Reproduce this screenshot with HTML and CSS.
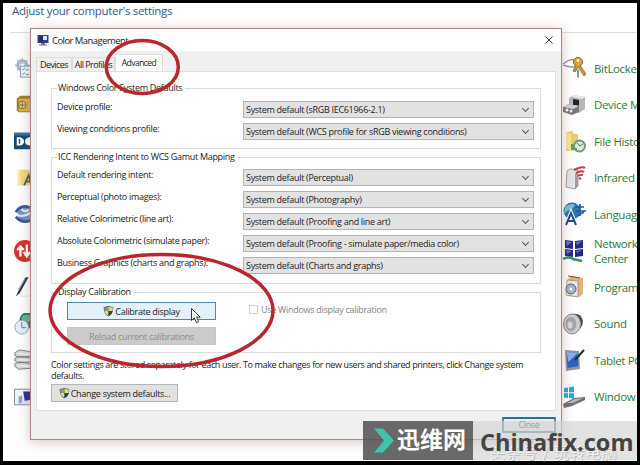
FILE: index.html
```html
<!DOCTYPE html>
<html lang="en">
<head>
    <meta charset="UTF-8">
    <title>Color Management</title>
    <link rel="stylesheet" href="styles.css">
</head>
<body>
    <svg width="0" height="0" class="defs">
        <symbol id="shield" viewBox="0 0 12 12">
            <path d="M6 .3C4.500 1.300 2.500 1.600.800 1.500.600 6 2 9.800 6 11.800 10 9.800 11.400 6 11.200 1.500 9.500 1.600 7.500 1.300 6 .3z" fill="#355a58"/>
            <path d="M6 1.200v4.800H1.500C1.300 4.800 1.300 3.500 1.400 2.300 3 2.300 4.600 2 6 1.200z" fill="#7b9a92"/>
            <path d="M6 1.200v4.800h4.500c.2-1.200.2-2.500.1-3.700C9 2.300 7.400 2 6 1.200z" fill="#f0d873"/>
            <path d="M6 6H1.600C2 8.300 3.500 10 6 11.200z" fill="#ebd585"/>
            <path d="M6 6h4.400C10 8.300 8.500 10 6 11.200z" fill="#24465c"/>
        </symbol>
    </svg>

    <div class="desktop">
        <h1>Adjust your computer's settings</h1>
        <div class="panel">
            <div class="left-items">
                <svg viewBox="0 0 24 24"><circle cx="9" cy="9" r="5" fill="none" stroke="#9eb3c9" stroke-width="3"/><path d="M9 1v16M1 9h16M3.500 3.500l11 11M14.500 3.500l-11 11" stroke="#a8bacd" stroke-width="1.500"/><circle cx="9" cy="9" r="2" fill="#fff"/><path d="M7 10h13v12H7z" fill="#f5f7fa" stroke="#8097b0"/><path d="M9 13l1 1 2-2M9 18l1 1 2-2M13 14h3M13 19h3" stroke="#4a75a5" fill="none"/></svg>
                <svg viewBox="0 0 24 24"><path d="M3 5l4-3h13v18H5l-2-2z" fill="#a47a24"/><path d="M5 5h14v14H5z" fill="#dfb043"/><circle cx="9" cy="12" r="4" fill="#f1dda0" stroke="#6c572b"/><path d="M9 9v6M6 12h6" stroke="#6c572b"/></svg>
                <svg viewBox="0 0 24 24"><path d="M0 3h24v18H0z" fill="#174a73"/><path d="M0 3h24v3H0z" fill="#347398"/><path d="M3 8h3q5 1 5 4.500T6 17H3zM20 8h-3q-5 1-5 4.500t5 4.500h3z" fill="#fff"/><path d="M6 10v5" stroke="#174a73" stroke-width="1.500"/></svg>
                <svg viewBox="0 0 24 24"><path d="M4 3h16v17H4z" fill="#f4d77e"/><path d="M4 3h3v17H4z" fill="#fae9a7"/><path d="M11 20l5-11 3 11M12 16h6" stroke="#3c6c4f" stroke-width="2" fill="none"/></svg>
                <svg viewBox="0 0 24 24"><circle cx="13" cy="12" r="9" fill="#7693c7"/><path d="M2 10q6-9 15-5M2 15q7 8 16 4" fill="none" stroke="#36599d" stroke-width="3"/><path d="M4 13q6 3 14-2M8 7q5 4 8 0" stroke="#dfe9f7" stroke-width="2.500" fill="none"/></svg>
                <svg viewBox="0 0 24 24"><circle cx="12" cy="12" r="12" fill="#d6342b"/><path d="M7 18V7M3.500 11L7 7l3.500 4M14 5v12M10.500 13l3.500 5 3.500-5" fill="none" stroke="#fff" stroke-width="2.500"/></svg>
                <svg viewBox="0 0 24 24"><path d="M2 22L12 2l4-1L6 19z" fill="#283447"/><path d="M5 15l7-12" stroke="#93a7be" stroke-width="1.500"/><path d="M7 22h10" stroke="#e1e1e1"/></svg>
                <svg viewBox="0 0 24 24"><circle cx="15" cy="8" r="9" fill="#26718f"/><path d="M8 4q7-5 12 1l-4 5-7 2z" fill="#62b58a"/><circle cx="8.500" cy="15.500" r="7.500" fill="#e3f0f7" stroke="#86a6ba"/><path d="M8.500 10v6H13" stroke="#5c7487" fill="none"/></svg>
                <svg viewBox="0 0 24 24"><g fill="#dadada" stroke="#7a7a7a"><path d="M1 4l5-3 13 2v5L5 9 1 7zM1 10l5-2 13 2v4L5 15l-4-2zM1 16l5-2 13 2v5L5 22l-4-3z"/></g><path d="M5 5l13 1M5 12l13 0M5 18l13 1" stroke="#fff"/></svg>
                <svg viewBox="0 0 24 24"><path d="M.5 3.500h23v17H.5z" fill="#eef2fb" stroke="#7b839b"/><path d="M10 6h12v12H12z" fill="#2b2f99"/><path d="M5 12l4-2v9H5z" fill="#8ca0c8"/><path d="M8 17l10-2 3 4H8z" fill="#d9dfef"/></svg>
            </div>
            <div class="right-items">
                <div class="item">
                    <svg viewBox="0 0 24 24"><path d="M1 8q9-8 20-2M1 9q10 4 15 0" stroke="#9d9ab6" stroke-width="1.500" fill="none"/><circle cx="16" cy="6" r="4.500" fill="#d2a83e" stroke="#846521"/><circle cx="16" cy="4.500" r="1.300" fill="#fff"/><path d="M14 9l-3 6 2 1 3-5 6 9 2-2-6-9" fill="#c4973a" stroke="#806128" stroke-width=".7"/><path d="M15 13v8l2 1v-8" fill="#8c9097"/></svg>
                    <span>BitLocker</span>
                </div>
                <div class="item">
                    <svg viewBox="0 0 24 24"><path d="M7 5l5-3 11 2v12l-6 4-10-2z" fill="#b7b8ba"/><path d="M12 2l11 2-3 2-10-2z" fill="#e9e9e9"/><path d="M11 6l6 1v6l-6-1z" fill="#202426"/><path d="M1 14l6-3 10 2v6L10 22 1 19z" fill="#77797d"/><path d="M1 14l6-3 10 2-6 3z" fill="#d0d1d4"/><circle cx="5" cy="17" r="1.500" fill="#fff"/><circle cx="9" cy="18" r="1.500" fill="#eee"/></svg>
                    <span>Device M</span>
                </div>
                <div class="item">
                    <svg viewBox="0 0 24 24"><path d="M4 3l7-1v3h5v16L4 22z" fill="#edce6b"/><path d="M4 3l5 2v17l-5-3z" fill="#f9e49a"/><circle cx="17.500" cy="17" r="5.500" fill="#dfeade" stroke="#6d987f" stroke-width="2"/><path d="M15 14l3 3 3-2" stroke="#47755b" fill="none"/><path d="M10 15v5h5" stroke="#54a45d" stroke-width="2" fill="none"/></svg>
                    <span>File Histo</span>
                </div>
                <div class="item">
                    <svg viewBox="0 0 24 24"><path d="M5 5l3-2 8 1v16l-3 3-9-2z" fill="#e4e5e8" stroke="#8b8c92" stroke-width=".8"/><path d="M13 8l3-3v15l-3 3z" fill="#9b9da3"/><path d="M12 4q8-4 11-2M14 7q5-3 8-1M16 10q3-2 5-1M17 13l2-1" stroke="#c53b43" stroke-width="2" fill="none"/></svg>
                    <span>Infrared</span>
                </div>
                <div class="item">
                    <svg viewBox="0 0 24 24"><circle cx="10" cy="9" r="8.500" fill="#2778b4"/><path d="M3 5q6-5 10-2l-3 4-5 2-3 3z" fill="#77bfd3"/><path d="M13 5h9M14 9h10M18 2v12M15 14l7-4" stroke="#245b9c" stroke-width="1.700"/><path d="M4 23l5-12 5 12M6 19h7" stroke="#fff" stroke-width="4" fill="none"/><path d="M4 23l5-12 5 12M6 19h7" stroke="#1d5195" stroke-width="2" fill="none"/></svg>
                    <span>Languag</span>
                </div>
                <div class="item">
                    <svg viewBox="0 0 24 24"><path d="M3 1l8 1v8l-8-1zM13 2l8-1v8l-8 1zM3 10l8 1v7l-8-1zM13 11l8-1v7l-8 1z" fill="#242989"/><path d="M4 2l6 1-5 4zM14 3l6-1-5 4zM4 11l6 1-5 3zM14 12l6-1-5 3z" fill="#6874c2"/><path d="M1 20q6-3 10 0l9 2" stroke="#37955d" stroke-width="2.500" fill="none"/></svg>
                    <span>Network<br>Center</span>
                </div>
                <div class="item">
                    <svg viewBox="0 0 24 24"><path d="M6 4l4-3 11 2v16l-4 3-11-1z" fill="#dfb476"/><path d="M5 5l11 1v16L4 20z" fill="#eee9df" stroke="#9b8d79" stroke-width=".8"/><path d="M6 1l12 2" stroke="#6b533d"/><circle cx="9" cy="14" r="5" fill="#a5b6c5" stroke="#586673"/><circle cx="9" cy="14" r="1.500" fill="#fff"/></svg>
                    <span>Program</span>
                </div>
                <div class="item">
                    <svg viewBox="0 0 24 24"><path d="M10 2q9-2 11 7 0 8-10 13z" fill="#494b4f"/><ellipse cx="10" cy="12" rx="8.500" ry="10" fill="#cdced1" stroke="#8b8d91"/><ellipse cx="9" cy="12" rx="5.500" ry="7" fill="#a2a5ab"/><ellipse cx="8" cy="13" rx="2.500" ry="3.500" fill="#d8dade"/></svg>
                    <span>Sound</span>
                </div>
                <div class="item">
                    <svg viewBox="0 0 24 24"><path d="M3 2l14 1 1 18-14 2z" fill="#8e97a5"/><path d="M4.500 4l11 1 1 13-11 2z" fill="#2f61c4"/><path d="M4.500 4l11 1-9 9z" fill="#8cb2ec"/><path d="M22 2l-9 10" stroke="#282d35" stroke-width="2"/></svg>
                    <span>Tablet PC</span>
                </div>
                <div class="item">
                    <svg viewBox="0 0 24 24"><path d="M2 3l4-.6v4.800H2zM7 2.200L12 1.500v5.700H7zM2 8.200h4V13l-4-.6zM7 8.200h5v5.600L7 13z" fill="#28a9da"/><path d="M1 19l11-6 11-1v3l-13 6-8 2z" fill="#6e7175"/><path d="M5 18l8-4 8-1-10 5z" fill="#b5b7ba"/></svg>
                    <span>Window</span>
                </div>
            </div>
        </div>
    </div>

    <div class="dialog">
        <div class="titlebar">
            <svg class="app-icon" viewBox="0 0 12 12"><path d="M.5 1h11v8H.5z" fill="#22458e"/><path d="M2 2h4v6H2z" fill="#203070"/><path d="M6 2h4v4H6z" fill="#dce9fa"/><path d="M4 9h4v1.500h2v1H2v-1h2z" fill="#6e7d96"/></svg>
            <span>Color Management</span>
            <svg class="close-x" viewBox="0 0 8 8"><path d="M.5.5l7 7M7.500.5l-7 7" stroke="#333"/></svg>
        </div>
        <div class="tabs">
            <div class="tab">Devices</div>
            <div class="tab profiles">All Profiles</div>
            <div class="tab active">Advanced</div>
        </div>
        <div class="tab-body">
            <fieldset>
                <legend>Windows Color System Defaults</legend>
                <div class="row"><label>Device profile:</label><div class="select">System default (sRGB IEC61966-2.1)</div></div>
                <div class="row"><label>Viewing conditions profile:</label><div class="select">System default (WCS profile for sRGB viewing conditions)</div></div>
            </fieldset>
            <fieldset class="mapping">
                <legend>ICC Rendering Intent to WCS Gamut Mapping</legend>
                <div class="row"><label>Default rendering intent:</label><div class="select">System default (Perceptual)</div></div>
                <div class="row"><label>Perceptual (photo images):</label><div class="select">System default (Photography)</div></div>
                <div class="row"><label>Relative Colorimetric (line art):</label><div class="select">System default (Proofing and line art)</div></div>
                <div class="row"><label>Absolute Colorimetric (simulate paper):</label><div class="select">System default (Proofing - simulate paper/media color)</div></div>
                <div class="row"><label>Business Graphics (charts and graphs):</label><div class="select">System default (Charts and graphs)</div></div>
            </fieldset>
            <fieldset class="calibration">
                <legend>Display Calibration</legend>
                <div class="cal-buttons">
                    <div class="btn hover"><svg class="shield"><use href="#shield"/></svg><span>Calibrate display</span></div>
                    <div class="btn disabled">Reload current calibrations</div>
                </div>
                <div class="check"><span class="box"></span><span>Use Windows display calibration</span></div>
            </fieldset>
            <p class="note">Color settings are stored separately for each user. To make changes for new users and shared printers, click Change system<br>defaults.</p>
            <div class="btn change"><svg class="shield"><use href="#shield"/></svg><span>Change system defaults...</span></div>
        </div>
        <div class="footer">
            <div class="close-btn">Close</div>
        </div>
    </div>

    <div class="watermark">
        <div class="brand">
            <svg viewBox="0 0 20 24"><path d="M0 0h9l11 12L9 24H0l10-12z" fill="#3fc3ad"/></svg>
            <span>迅维网</span>
        </div>
        <div class="site">
            <span class="credit">头条号 / 玩转电脑</span>
            <span class="domain">Chinafix.com</span>
        </div>
    </div>

    <!-- red circles and mouse pointer -->
    <svg class="marks" viewBox="0 0 640 465">
        <ellipse cx="142.300" cy="67" rx="36" ry="26.500"/>
        <ellipse cx="161.500" cy="310.500" rx="111.500" ry="56"/>
        <path class="pointer" d="M191.500 308.500v12l2.800-2.500 2.200 4.700 2.200-1-2.200-4.500h3.700z"/>
    </svg>
</body>
</html>
```
FILE: styles.css
```css
* {
    box-sizing: border-box;
}
body {
    margin: 0;
    width: 640px;
    height: 465px;
    padding: 3px 3px 4px;
    overflow: hidden;
    position: relative;
    background: #000;
    font-family: "Open Sans", "Noto Sans", sans-serif;
    font-size: 9px;
    color: #222;
}
.defs {
    position: absolute;
}

/* control panel behind the dialog */
.desktop {
    height: 458px;
    background: #fff;
    overflow: hidden;
}
.desktop h1 {
    margin: 0 0 0 7px;
    height: 30px;
    padding-left: 2px;
    border-bottom: 1px solid #dedede;
    font-size: 11.5px;
    letter-spacing: -0.3px;
    font-weight: normal;
    line-height: 15px;
    color: #35577f;
    white-space: nowrap;
}
.panel {
    display: flex;
    justify-content: space-between;
    padding: 17px 0 0 10px;
}
.left-items,
.right-items {
    display: grid;
    grid-template-rows: repeat(10, 36.500px);
    align-items: center;
}
.left-items svg {
    width: 24px;
    height: 22px;
}
.right-items {
    width: 75px;
}
.item {
    display: flex;
    align-items: center;
    gap: 8px;
    font-size: 11.500px;
    letter-spacing: -0.35px;
    line-height: 15px;
    color: #2f7b38;
    white-space: nowrap;
}
.item svg {
    width: 24px;
    height: 24px;
    flex: none;
}

/* dialog window */
.dialog {
    position: absolute;
    left: 30px;
    top: 28px;
    width: 532px;
    height: 412px;
    border: 1px solid #ad8580;
    background: #f0f0f0;
    box-shadow: 0 2px 12px rgba(110, 60, 50, 0.3);
    letter-spacing: -0.3px;
}
.titlebar {
    display: flex;
    align-items: center;
    height: 22px;
    padding: 0 8px 0 6px;
    background: #fff;
    font-size: 9.500px;
    letter-spacing: -0.550px;
}
.app-icon {
    width: 12px;
    height: 12px;
    margin-right: 3px;
}
.close-x {
    width: 8px;
    height: 8px;
    margin-left: auto;
}
.tabs {
    display: flex;
    align-items: flex-end;
    height: 20px;
    padding-left: 5px;
    letter-spacing: -0.550px;
}
.tab {
    width: 36px;
    height: 14px;
    border: 1px solid #dcdcdc;
    border-bottom: none;
    line-height: 14px;
    text-align: center;
    white-space: nowrap;
}
.tab.profiles {
    width: 43px;
}
.tab.active {
    width: 48px;
    height: 17px;
    background: #fff;
    font-size: 8.500px;
    line-height: 16px;
}
.tab-body {
    width: 520px;
    height: 340px;
    margin-left: 5px;
    padding: 10px 14px 0;
    border: 1px solid #dfdfdf;
    background: #fff;
}
fieldset {
    margin: 0 0 2px;
    height: 67px;
    min-width: 0;
    padding: 7px 6px 0 5px;
    border: 1px solid #dcdcdc;
}
fieldset.mapping {
    height: 133px;
    padding-top: 6px;
}
fieldset.calibration {
    display: flex;
    padding: 4px 6px 0 15px;
    margin-bottom: 6px;
}
legend {
    height: 12px;
    padding: 0 3px 0 1px;
    line-height: 12px;
}
.calibration legend {
    margin-left: -10px;
}
.row {
    display: flex;
    justify-content: space-between;
    height: 22px;
}
.row label {
    line-height: 12px;
}
.select {
    position: relative;
    width: 291px;
    height: 17px;
    padding-left: 2px;
    border: 1px solid #b3b3b3;
    background: #e2e2e2;
    line-height: 15px;
    white-space: nowrap;
}
.select::after {
    content: "";
    position: absolute;
    right: 5px;
    top: 4px;
    width: 4px;
    height: 4px;
    border: solid #555;
    border-width: 0 1px 1px 0;
    transform: rotate(45deg);
}
.btn {
    display: flex;
    align-items: center;
    justify-content: center;
    width: 149px;
    height: 18px;
    border: 1px solid #b5b5b5;
    background: #e1e1e1;
    white-space: nowrap;
}
.btn.hover {
    margin-bottom: 7px;
    border-color: #4a8aad;
    background: #e4f1fa;
}
.btn.disabled {
    border-color: #c6c6c6;
    background: #cbcbcb;
    color: #8c8c8c;
}
.shield {
    width: 11px;
    height: 12px;
    margin-right: 1px;
}
.check {
    display: flex;
    align-items: center;
    height: 14px;
    margin-left: 33px;
    gap: 3px;
    color: #858585;
}
.box {
    width: 9px;
    height: 9px;
    border: 1px solid #cfcfcf;
}
.note {
    margin: 0 0 3px;
    line-height: 11px;
    letter-spacing: -0.370px;
    white-space: nowrap;
}
.btn.change {
    width: 127px;
}
.footer {
    display: flex;
    justify-content: flex-end;
    padding: 6px 5px 0 0;
}
.close-btn {
    width: 54px;
    height: 16px;
    border: 2px solid #4f8ba8;
    border-top-color: #286f91;
    background: #e8eef1;
    line-height: 12px;
    text-align: center;
    color: #333;
}

/* overlays */
.watermark {
    position: absolute;
    left: 363px;
    top: 421px;
    display: flex;
    width: 274px;
    height: 39px;
}
.brand {
    display: flex;
    align-items: center;
    width: 110px;
    padding-left: 11px;
    gap: 3px;
    background: rgba(84, 84, 84, 0.88);
    color: #fff;
    font: bold 23px/36px "Noto Sans CJK SC", sans-serif;
}
.brand svg {
    width: 20px;
    height: 25px;
    flex: none;
}
.brand span {
    padding-bottom: 5px;
    white-space: nowrap;
}
.site {
    position: relative;
    flex: 1;
    background: rgba(210, 210, 210, 0.65);
}
.domain {
    position: absolute;
    left: 7px;
    top: 4px;
    font-size: 23.500px;
    line-height: 34px;
    font-weight: bold;
    color: #444;
}
.credit {
    position: absolute;
    left: 17px;
    bottom: -1px;
    font: 15px/18px "Noto Sans CJK SC", sans-serif;
    letter-spacing: 1px;
    color: #f0f0f0;
    text-shadow: 1px 1px 0 #bbb;
    white-space: nowrap;
}
.marks {
    position: absolute;
    left: 0;
    top: 0;
    width: 640px;
    height: 465px;
}
.marks ellipse {
    fill: none;
    stroke: #b9262e;
    stroke-width: 3.500;
}
.pointer {
    fill: #fff;
    stroke: #222;
    stroke-width: 0.900;
}
```
